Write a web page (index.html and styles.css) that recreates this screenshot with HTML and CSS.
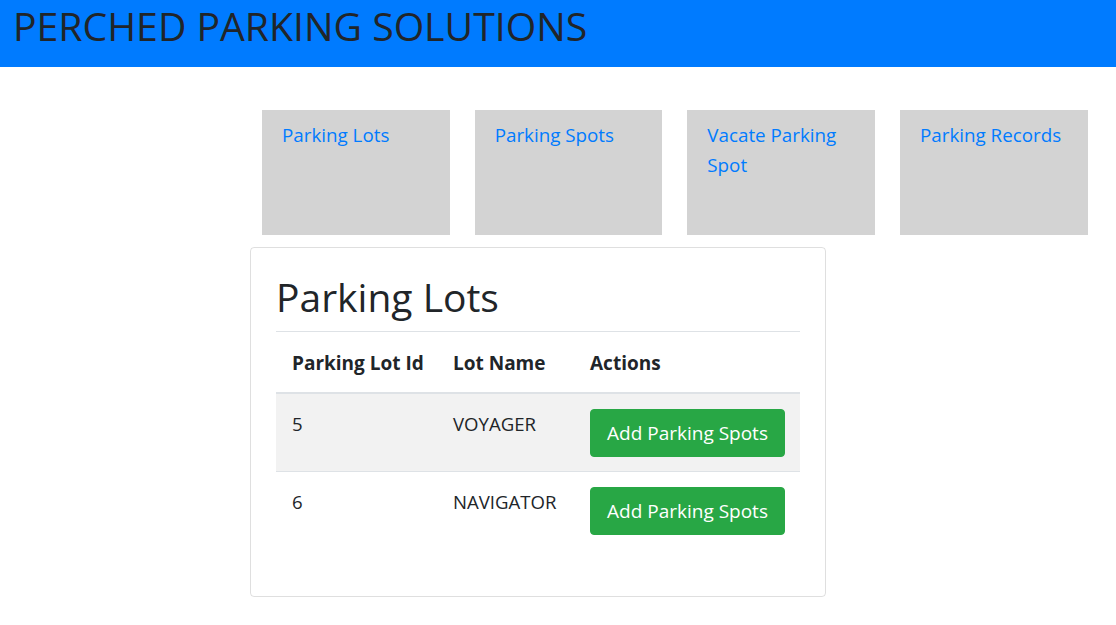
FILE: index.html
```html
<!DOCTYPE html>
<html lang="en">
<head>
<meta charset="utf-8">
<title>Perched Parking Solutions</title>
<link rel="stylesheet" href="styles.css">
</head>
<body>
<header class="topbar">
  <h1 class="brand">PERCHED PARKING SOLUTIONS</h1>
</header>
<main class="page">
  <nav class="tiles">
    <div class="tile"><a href="#" class="tile-link">Parking Lots</a></div>
    <div class="tile"><a href="#" class="tile-link">Parking Spots</a></div>
    <div class="tile"><a href="#" class="tile-link">Vacate Parking Spot</a></div>
    <div class="tile"><a href="#" class="tile-link">Parking Records</a></div>
  </nav>
  <section class="card">
    <h1 class="card-title">Parking Lots</h1>
    <hr class="divider">
    <table class="lots">
      <colgroup>
        <col class="c-id">
        <col class="c-name">
        <col class="c-act">
      </colgroup>
      <thead>
        <tr><th>Parking Lot Id</th><th>Lot Name</th><th>Actions</th></tr>
      </thead>
      <tbody>
        <tr class="odd"><td>5</td><td>VOYAGER</td><td><button class="btn-add">Add Parking Spots</button></td></tr>
        <tr><td>6</td><td>NAVIGATOR</td><td><button class="btn-add">Add Parking Spots</button></td></tr>
      </tbody>
    </table>
  </section>
</main>
</body>
</html>
```
FILE: styles.css
```css
* { box-sizing: border-box; }
html, body { margin: 0; padding: 0; }
body {
  font-family: "Open Sans", "Noto Sans", "Liberation Sans", sans-serif;
  color: #212529;
  background: #fff;
  font-size: 18px;
}
.topbar {
  background: #007bff;
  height: 67px;
  padding: 1px 13px 0;
}
.brand {
  margin: 0;
  font-size: 39.2px;
  font-weight: 400;
  line-height: 50px;
  white-space: nowrap;
  color: #212529;
}
.page {
  padding: 43px 0 0 0;
}
.tiles {
  display: flex;
  gap: 25px;
  margin-left: 262px;
}
.tile {
  width: 187.67px;
  height: 125px;
  background: #d3d3d3;
  padding: 10px 20px;
}
.tile-link {
  color: #007bff;
  text-decoration: none;
  font-size: 18.8px;
  line-height: 30px;
}
.card {
  margin: 12px 0 0 250px;
  width: 576px;
  border: 1px solid rgba(0,0,0,.125);
  border-radius: 4px;
  padding: 25px 25px 27px;
}
.card-title {
  margin: 0;
  font-size: 39px;
  font-weight: 500;
  line-height: 48px;
}
.divider {
  margin: 10px 0 0;
  border: 0;
  border-top: 1px solid #dee2e6;
}
.lots {
  width: 100%;
  table-layout: fixed;
  border-collapse: collapse;
  margin-bottom: 20px;
}
.c-id { width: 161px; }
.c-name { width: 137px; }
.lots th, .lots td {
  text-align: left;
  vertical-align: top;
  padding: 15px 16px 14px;
  line-height: 30px;
  font-size: 18.6px;
  white-space: nowrap;
}
.lots th {
  font-weight: 700;
  font-size: 19px;
  padding-top: 16px;
  border-bottom: 2px solid #dee2e6;
}
.lots tbody tr { border-bottom: 1px solid #dee2e6; }
.lots tbody tr:last-child { border-bottom: 0; }
.lots tr.odd { background: #f2f2f2; }
.btn-add {
  display: block;
  font-family: inherit;
  font-size: 19px;
  line-height: 27px;
  padding: 10px 16px 9px;
  white-space: nowrap;
  color: #fff;
  background: #28a745;
  border: 1px solid #28a745;
  border-radius: 4px;
  cursor: pointer;
}
```
